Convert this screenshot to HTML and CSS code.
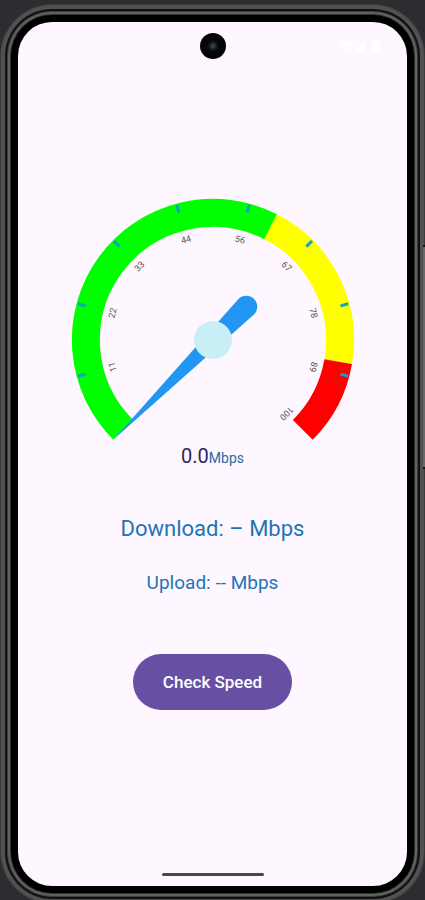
FILE: index.html
```
<!DOCTYPE html>
<html lang="en">
	<head>
		<meta charset="UTF-8">
		<meta name="viewport" content="width=device-width, initial-scale=1">
		<title>Speed Test</title>
		<link rel="stylesheet" href="styles.css">
	</head>
	<body>
		<div class="phone">
			<div class="screen">
				<header class="status">
					<span class="camera"></span>
					<svg class="status-icons" width="44" height="14" viewBox="0 0 44 14" aria-hidden="true">
						<path d="M1 4Q8 -1 15 4L8 12Z"/>
						<path d="M26 2V12H16Z"/>
						<path d="M33 3H35V1H39V3H41V12H33Z"/>
					</svg>
				</header>
				<main class="content">
					<svg class="gauge" width="284" height="242" viewBox="-142 -142 284 242" role="img" aria-label="Speed gauge">
						<!-- 270 degree scale, starts at bottom left -->
						<g class="arc">
							<path class="low" d="M-89.8 89.8A127 127 0 0 1 57.7 -113.2"/>
							<path class="mid" d="M57.7 -113.2A127 127 0 0 1 125.2 21.6"/>
							<path class="high" d="M125.2 21.6A127 127 0 0 1 89.8 89.8"/>
						</g>
						<g class="ticks">
							<path d="M132 0H140" transform="rotate(165)"/>
							<path d="M132 0H140" transform="rotate(195)"/>
							<path d="M132 0H140" transform="rotate(225)"/>
							<path d="M132 0H140" transform="rotate(255)"/>
							<path d="M132 0H140" transform="rotate(285)"/>
							<path d="M132 0H140" transform="rotate(315)"/>
							<path d="M132 0H140" transform="rotate(345)"/>
							<path d="M132 0H140" transform="rotate(15)"/>
						</g>
						<g class="numbers">
							<text y="-101" transform="rotate(255)">11</text>
							<text y="-101" transform="rotate(285)">22</text>
							<text y="-101" transform="rotate(315)">33</text>
							<text y="-101" transform="rotate(345)">44</text>
							<text y="-101" transform="rotate(15)">56</text>
							<text y="-101" transform="rotate(45)">67</text>
							<text y="-101" transform="rotate(75)">78</text>
							<text y="-101" transform="rotate(105)">89</text>
							<text y="-101" transform="rotate(135)">100</text>
						</g>
						<path class="needle" d="M140 0L-47 -11A11 11 0 0 0 -47 11Z" transform="rotate(135)"/>
						<circle class="hub" r="19"/>
					</svg>
					<p class="speed">0.0<span class="unit">Mbps</span></p>
					<p class="download">Download: – Mbps</p>
					<p class="upload">Upload: -- Mbps</p>
					<button class="check" type="button">Check Speed</button>
				</main>
				<div class="home-bar"></div>
			</div>
			<span class="side-key"></span>
		</div>
	</body>
</html>
```
FILE: styles.css
```
*{
	box-sizing: border-box;
}
body{
	margin: 0;
	background: #2b2d31;
	font-family: Roboto, "Liberation Sans", sans-serif;
}
.phone{
	position: relative;
	display: flex;
	min-height: 100vh;
	padding: 22px 18px 14px;
	overflow: hidden;
}
.screen{
	flex: 1;
	display: flex;
	flex-direction: column;
	align-items: center;
	background: #fef7ff;
	border-radius: 34px;
	/* bezel first, then the metal frame */
	box-shadow: 0 0 0 7px #000, 0 0 0 8px #303030, 0 0 0 10px #626262, 0 0 0 11px #3c3c3c, 0 0 0 13px #101010, 0 0 0 17px #505151, 0 0 0 18px #3a3b3c;
}
.status{
	display: grid;
	grid-template-columns: 1fr auto 1fr;
	align-items: center;
	width: 100%;
	padding: 11px 24px 0;
}
.camera{
	grid-column: 2;
	width: 26px;
	height: 26px;
	border-radius: 50%;
	background: radial-gradient(circle, #42485f 0, #14151d 4px, #050507 6px);
}
.status-icons{
	justify-self: end;
	fill: #fff;
}
.content{
	flex: 1;
	display: flex;
	flex-direction: column;
	align-items: center;
	padding-top: 139px;
	color: #1c75b5;
}
.content p{
	margin: 0;
}
.gauge{
	display: block;
}
.arc{
	fill: none;
	stroke-width: 28;
}
.low{
	stroke: #00ff00;
}
.mid{
	stroke: #ffff00;
}
.high{
	stroke: #ff0000;
}
.ticks{
	stroke: #14a0c0;
	stroke-width: 3;
}
.numbers{
	fill: #555;
	font-size: 9px;
	text-anchor: middle;
}
.needle{
	fill: #2196f3;
}
.hub{
	fill: #c8eff6;
}
.speed{
	font-size: 20px;
	line-height: 32px;
	color: #2c1f66;
}
.unit{
	font-size: 14px;
	color: #2a6c9f;
}
.content .download{
	margin-top: 39px;
	font-size: 22px;
	line-height: 32px;
}
.content .upload{
	margin-top: 22px;
	font-size: 19px;
	line-height: 32px;
}
.check{
	margin-top: 55px;
	padding: 0 30px;
	height: 56px;
	border: 0;
	border-radius: 28px;
	background: #6750a4;
	color: #fff;
	font-family: inherit;
	font-size: 17px;
	font-weight: 500;
}
.home-bar{
	width: 102px;
	height: 3px;
	margin-bottom: 10px;
	border-radius: 2px;
	background: #4b454d;
}
.side-key{
	position: absolute;
	top: 245px;
	right: 0;
	width: 2px;
	height: 224px;
	border: solid #111;
	border-width: 2px 0;
	background: #686868;
}
```
